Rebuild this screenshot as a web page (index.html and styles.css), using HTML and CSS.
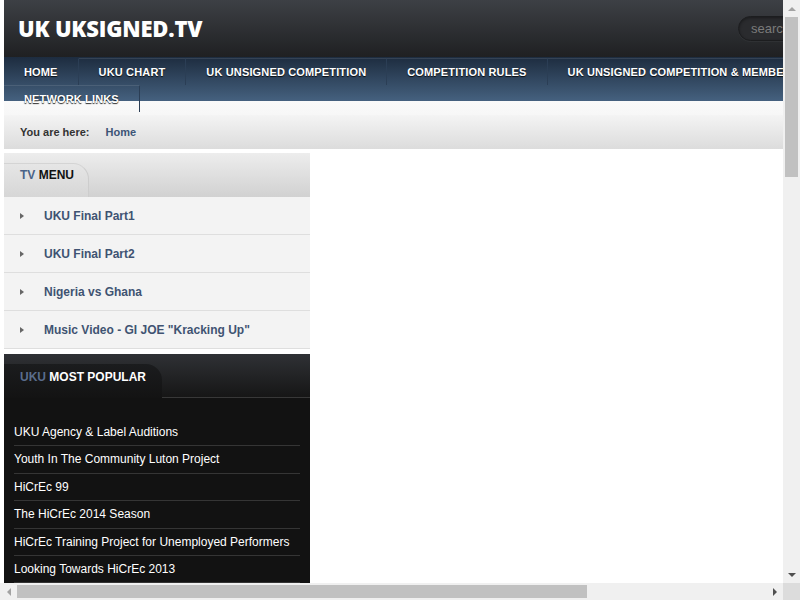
FILE: index.html
```html
<!DOCTYPE html>
<html>
<head>
  <meta charset="UTF-8">
  <title>UK UKSIGNED.TV</title>
  <link rel="stylesheet" href="styles.css">
</head>
<body>
  <div class="page">
    <!-- Cabecera -->
    <header class="top">
      <div class="logo">UK UKSIGNED.TV</div>
      <input type="text" class="search" placeholder="search">
    </header>

    <!-- Menu principal -->
    <nav class="mainnav">
      <ul>
        <li class="first"><a href="#">Home</a></li>
        <li><a href="#">UKU Chart</a></li>
        <li><a href="#">UK Unsigned Competition</a></li>
        <li><a href="#">Competition Rules</a></li>
        <li><a href="#">UK Unsigned Competition &amp; Members Area</a></li>
        <li><a href="#">Network Links</a></li>
      </ul>
    </nav>

    <!-- Ruta -->
    <div class="crumbs-wrap">
      <div class="crumbs">
        <span class="here">You are here:</span>
        <a href="#">Home</a>
      </div>
    </div>

    <div class="main">
      <aside class="sidebar">
        <div class="module light">
          <div class="module-head"><h3 class="tab"><span>TV</span> MENU</h3></div>
          <ul class="menu">
            <li><a href="#">UKU Final Part1</a></li>
            <li><a href="#">UKU Final Part2</a></li>
            <li><a href="#">Nigeria vs Ghana</a></li>
            <li><a href="#">Music Video - GI JOE "Kracking Up"</a></li>
          </ul>
        </div>

        <div class="module dark">
          <div class="module-head"><h3 class="tab"><span>UKU</span> MOST POPULAR</h3></div>
          <ul class="popular">
            <li><a href="#">UKU Agency &amp; Label Auditions</a></li>
            <li><a href="#">Youth In The Community Luton Project</a></li>
            <li><a href="#">HiCrEc 99</a></li>
            <li><a href="#">The HiCrEc 2014 Season</a></li>
            <li><a href="#">HiCrEc Training Project for Unemployed Performers</a></li>
            <li><a href="#">Looking Towards HiCrEc 2013</a></li>
          </ul>
        </div>
      </aside>
      <div class="content"></div>
    </div>
  </div>

  <!-- Barras de desplazamiento de la ventana -->
  <div class="sb sb-v" aria-hidden="true">
    <span class="sb-btn up off"></span>
    <span class="sb-thumb"></span>
    <span class="sb-btn down"></span>
  </div>
  <div class="sb sb-h" aria-hidden="true">
    <span class="sb-btn left off"></span>
    <span class="sb-thumb"></span>
    <span class="sb-btn right"></span>
  </div>
  <div class="sb-corner" aria-hidden="true"></div>
</body>
</html>
```

FILE: styles.css
```css
/* Colores */
:root {
  --nav-top: #1d2c3f;
  --nav-bottom: #45617f;
  --link-blue: #3f5372;
  --dark-bg: #121212;
}
body {
  margin: 0;
  padding: 0;
  background: #fff;
  font-family: "Liberation Sans", Arial, sans-serif;
  font-size: 12px;
  color: #333;
}
a {
  text-decoration: none;
}
ul {
  list-style: none;
  margin: 0;
  padding: 0;
}
.page {
  margin-left: 4px;
  width: 1026px;
}
/* Cabecera */
.top {
  height: 57px;
  background: linear-gradient(#3d4045, #1f2022);
  display: flex;
  align-items: center;
}
.logo {
  font-family: "Open Sans", sans-serif;
  font-weight: 800;
  font-size: 22px;
  color: #fff;
  padding-left: 14px;
  padding-bottom: 1px;
  letter-spacing: -0.2px;
}
.search {
  margin-left: auto;
  margin-right: 112px;
  width: 180px;
  height: 25px;
  box-sizing: border-box;
  border-radius: 13px;
  border: 1px solid #1c1d1f;
  background: #2a2b2e;
  box-shadow: inset 0 1px 3px rgba(0,0,0,0.4), 0 1px 0 rgba(255,255,255,0.04);
  padding: 0 12px;
  font-family: "Liberation Sans", Arial, sans-serif;
  font-size: 13px;
  color: #ccc;
  outline: none;
}
.search::placeholder {
  color: #7b7b7b;
}
/* Menu principal */
.mainnav {
  height: 44px;
  background: linear-gradient(var(--nav-top), var(--nav-bottom));
  position: relative;
  z-index: 2;
}
.mainnav ul {
  display: flex;
  flex-wrap: wrap;
  width: 960px;
  padding-top: 1px;
}
.mainnav li {
  border-top: 1px solid rgba(255,255,255,0.1);
  border-right: 1px solid #2b3e55;
}
.mainnav li.first {
  border-top-color: transparent;
}
.mainnav a {
  display: block;
  padding: 0 20px;
  line-height: 26px;
  font-size: 11px;
  font-weight: bold;
  text-transform: uppercase;
  color: #fff;
  letter-spacing: 0.15px;
  text-shadow: 0 1px 1px rgba(0,0,0,0.85);
}
/* Ruta */
.crumbs-wrap {
  padding-top: 14px;
  background: linear-gradient(#fafafa, #efefef);
}
.crumbs {
  height: 34px;
  display: flex;
  align-items: center;
  gap: 16px;
  padding-left: 16px;
  background: linear-gradient(#f4f4f4, #dcdcdc);
  font-size: 11px;
}
.crumbs .here {
  color: #333;
  font-weight: bold;
}
.crumbs a {
  color: #3d5576;
  font-weight: bold;
}
/* Columnas */
.main {
  display: flex;
  padding-top: 4px;
  min-height: 1850px;
}
.sidebar {
  width: 306px;
  flex: none;
}
.content {
  flex: 1;
}
/* Modulos */
.module {
  margin-bottom: 5px;
}
.module-head {
  height: 44px;
  box-sizing: border-box;
  padding-top: 10px;
}
.tab {
  display: inline-block;
  margin: 0;
  height: 34px;
  box-sizing: border-box;
  padding: 6px 14px 0 16px;
  border-radius: 0 16px 0 0;
  font-size: 12px;
  font-weight: bold;
}
.light .module-head {
  background: linear-gradient(#ededed, #d1d1d1);
}
.light .tab {
  background: linear-gradient(#e6e6e6, #d6d6d6);
  border-top: 1px solid #d4d4d4;
  border-right: 1px solid #cdcdcd;
  padding-top: 4px;
  color: #111;
}
.light .tab span {
  color: #4a6388;
}
.menu li {
  background: #f3f3f3;
  border-bottom: 1px solid #dedede;
}
.menu a {
  display: flex;
  align-items: center;
  height: 37px;
  padding-left: 16px;
  color: var(--link-blue);
  font-weight: bold;
  font-size: 12px;
}
.menu a::before {
  content: "";
  width: 0;
  height: 0;
  border-top: 3px solid transparent;
  border-bottom: 3px solid transparent;
  border-left: 4px solid #666;
  margin-right: 20px;
}
.dark {
  background: var(--dark-bg);
}
.dark .module-head {
  background: linear-gradient(#2f3135, #161616);
  border-bottom: 1px solid #383838;
}
.dark .tab {
  background: linear-gradient(#1b1c1e, #131313);
  color: #fff;
  padding-right: 16px;
}
.dark .tab span {
  color: #5a6d8c;
}
.popular {
  padding: 21px 10px 0;
}
.popular li {
  border-bottom: 1px solid #353535;
}
.popular a {
  display: block;
  line-height: 26.4px;
  color: #fff;
  font-size: 12px;
}
/* Barras de desplazamiento */
.sb {
  position: fixed;
  display: flex;
  background: #f0f0f0;
  z-index: 10;
}
.sb-v {
  top: 0;
  right: 0;
  width: 17px;
  bottom: 17px;
  flex-direction: column;
}
.sb-h {
  left: 0;
  bottom: 0;
  height: 17px;
  right: 17px;
}
.sb-corner {
  position: fixed;
  right: 0;
  bottom: 0;
  width: 17px;
  height: 17px;
  background: #dcdcdc;
  z-index: 10;
}
.sb-thumb {
  background: #c1c1c1;
}
.sb-v .sb-thumb {
  height: 160px;
  margin: 0 2px;
}
.sb-h .sb-thumb {
  width: 570px;
  margin: 2px 0;
}
.sb-btn {
  flex: none;
  width: 17px;
  height: 17px;
  display: flex;
  align-items: center;
  justify-content: center;
}
.sb-btn::before {
  content: "";
  width: 0;
  height: 0;
}
.sb-btn.down,
.sb-btn.right {
  margin-top: auto;
  margin-left: auto;
}
.sb-btn.up::before {
  border-left: 4px solid transparent;
  border-right: 4px solid transparent;
  border-bottom: 4px solid #505050;
}
.sb-btn.down::before {
  border-left: 4px solid transparent;
  border-right: 4px solid transparent;
  border-top: 4px solid #505050;
}
.sb-btn.left::before {
  border-top: 4px solid transparent;
  border-bottom: 4px solid transparent;
  border-right: 4px solid #505050;
}
.sb-btn.right::before {
  border-top: 4px solid transparent;
  border-bottom: 4px solid transparent;
  border-left: 4px solid #505050;
}
.sb-btn.off::before {
  border-bottom-color: #a3a3a3;
  border-right-color: #a3a3a3;
}
.sb-btn.off.up::before {
  border-right-color: transparent;
}
.sb-btn.off.left::before {
  border-bottom-color: transparent;
}
```
